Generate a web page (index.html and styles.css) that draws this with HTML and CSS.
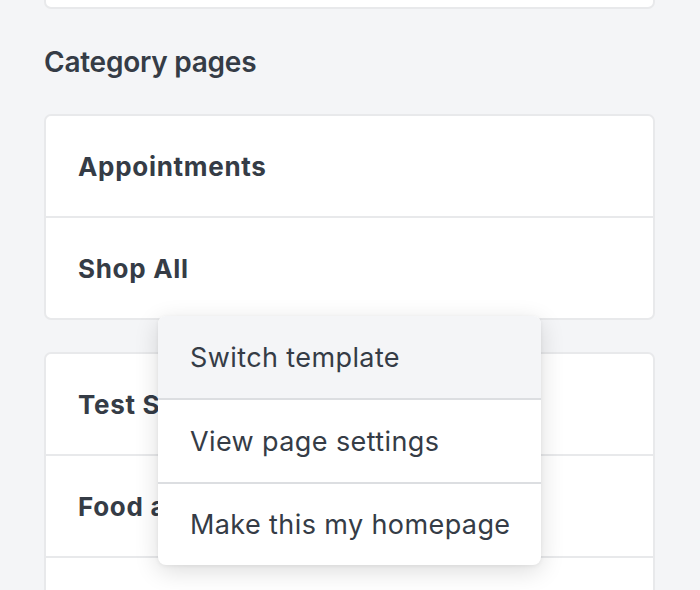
FILE: index.html
```html
<!DOCTYPE html>
<html lang="en">
<head>
<meta charset="utf-8">
<title>Category pages</title>
<link rel="stylesheet" href="styles.css">
</head>
<body>
<div class="page">
  <div class="card card-top"></div>
  <h2 class="section-title">Category pages</h2>
  <div class="card">
    <div class="row">Appointments</div>
    <div class="row">Shop All</div>
  </div>
  <div class="card card-gap">
    <div class="row">Test Shop</div>
    <div class="row">Food and Drink</div>
    <div class="row"></div>
  </div>
  <div class="menu">
    <div class="menu-item is-hover">Switch template</div>
    <div class="menu-item">View page settings</div>
    <div class="menu-item">Make this my homepage</div>
  </div>
</div>
</body>
</html>
```

FILE: styles.css
```css
html, body {
  margin: 0;
  padding: 0;
  height: 100%;
  overflow: hidden;
}
body {
  background: #f4f5f7;
  font-family: "Inter", "Open Sans", sans-serif;
  color: #353c46;
}
.page {
  position: relative;
  display: flow-root;
  padding: 0 45px 0 44px;
}
.card {
  background: #ffffff;
  border: 2px solid #e8e9eb;
  border-radius: 7px;
}
.card-top {
  margin-top: -40px;
  height: 45px;
}
.section-title {
  margin: 37px 0 36px 0;
  font-size: 28px;
  line-height: 32px;
  font-weight: 600;
  letter-spacing: -0.25px;
}
.card-gap {
  margin-top: 32px;
}
.row {
  height: 100px;
  display: flex;
  align-items: center;
  padding-left: 32px;
  font-size: 26px;
  font-weight: 700;
  letter-spacing: 0.7px;
  border-top: 2px solid #e8e9eb;
}
.row:first-child {
  border-top: none;
}
.menu {
  position: absolute;
  left: 158px;
  top: 316px;
  width: 383px;
  background: #ffffff;
  border-radius: 8px;
  overflow: hidden;
  box-shadow: 0 6px 24px rgba(0, 0, 0, 0.14), 0 1px 4px rgba(0, 0, 0, 0.06);
}
.menu-item {
  height: 82px;
  display: flex;
  align-items: center;
  padding-left: 32px;
  font-size: 27px;
  font-weight: 400;
  letter-spacing: 0.4px;
  border-top: 2px solid #dcdee1;
}
.menu-item:first-child {
  border-top: none;
}
.menu-item:last-child {
  height: 81px;
}
.menu-item.is-hover {
  background: #f4f5f7;
}
```
